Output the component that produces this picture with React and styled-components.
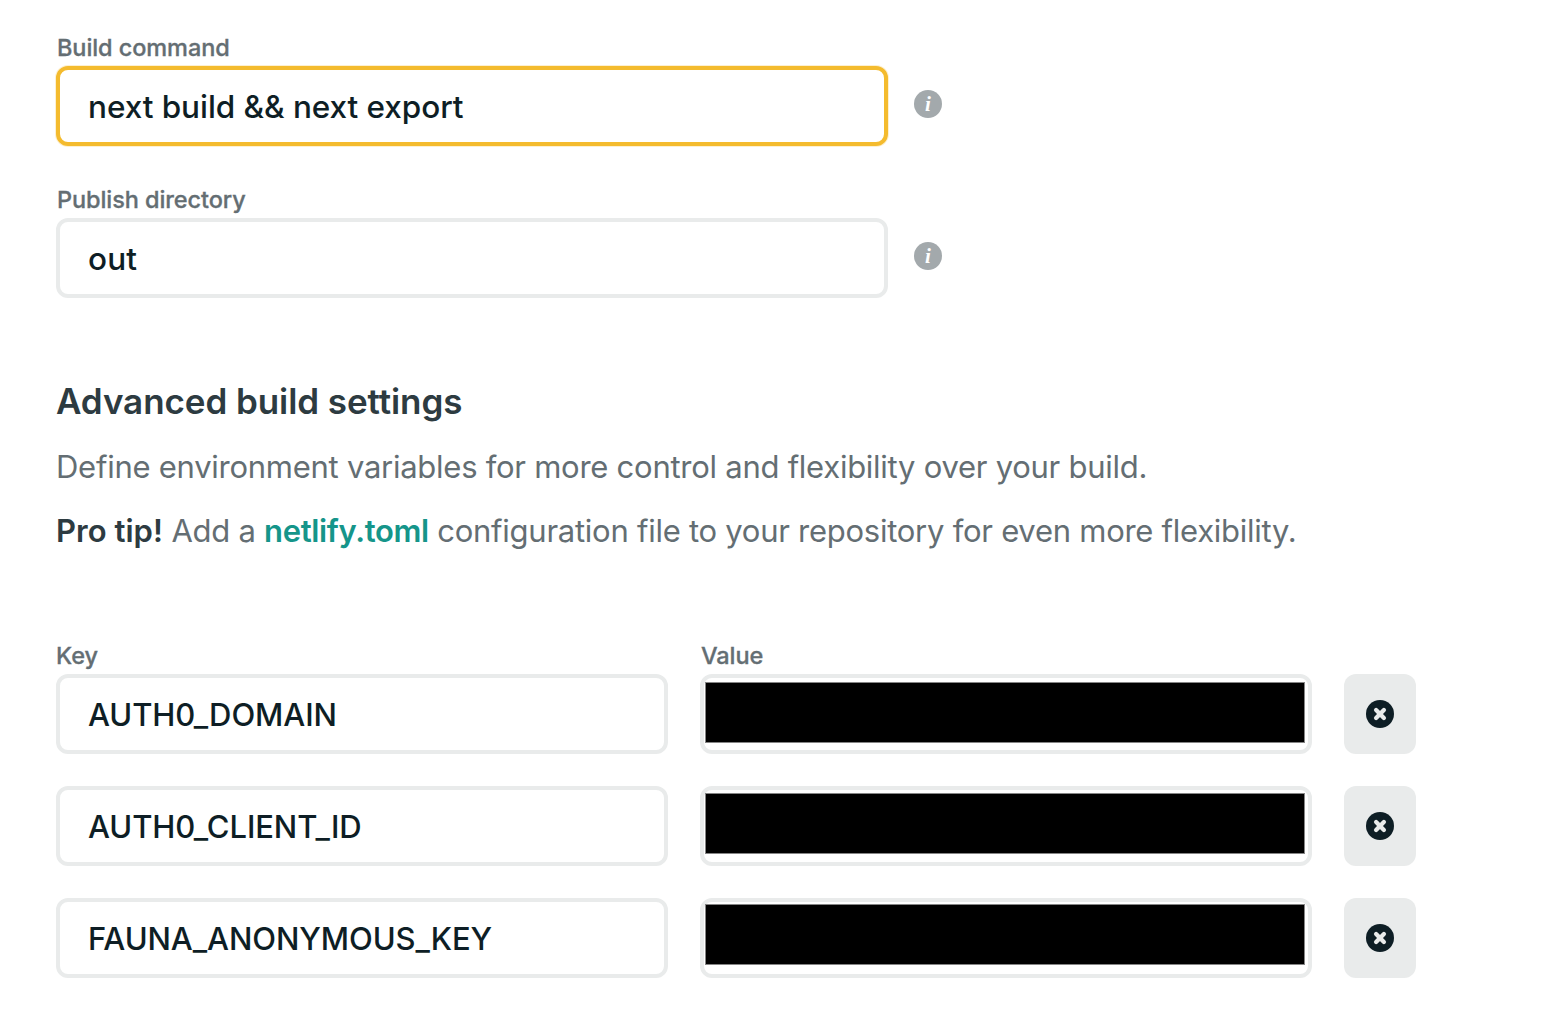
import React from "react";
import styled, { createGlobalStyle } from "styled-components";

const GlobalStyle = createGlobalStyle`
  *, *::before, *::after { box-sizing: border-box; }
  body {
    margin: 0;
    background: #fff;
    font-family: Inter, "Liberation Sans", sans-serif;
    color: #0e1e25;
  }
`;

const Page = styled.main`
  display: flex;
  flex-direction: column;
  height: 1026px;
  padding: 34px 56px 0;
  overflow: hidden;
`;

const Setting = styled.section`
  display: flex;
  flex-direction: column;
  margin-bottom: 40px;
`;

const Label = styled.label`
  height: 32px;
  padding-left: ${(p) => p.$indent || 0}px;
  font-size: 23.5px;
  font-weight: 500;
  line-height: 27px;
  letter-spacing: -0.08px;
  color: #646e73;
  -webkit-text-stroke: 0.3px #646e73;
`;

const SettingRow = styled.div`
  display: flex;
  align-items: center;
  gap: 26px;
`;

const Field = styled.div`
  display: flex;
  align-items: center;
  width: ${(p) => p.$width}px;
  height: 80px;
  padding: ${(p) => p.$code ? 2 : 1}px 28px 0;
  border: 4px solid ${(p) => (p.$focused ? "#f4bb2e" : "#e9ebeb")};
  border-radius: 12px;
  box-shadow: ${(p) => (p.$focused ? "0 0 0 1px rgba(244, 187, 46, 0.22)" : "none")};
  background: #fff;
  font-size: ${(p) => p.$code ? 31 : 31.5}px;
  font-weight: 500;
  line-height: 40px;
  letter-spacing: ${(p) => p.$tracking || 0}px;
  white-space: nowrap;
`;

const InfoBadge = styled.span`
  display: flex;
  align-items: center;
  justify-content: center;
  width: 28px;
  height: 28px;
  margin-bottom: 4px;
  border-radius: 50%;
  background: #a3a9ac;
  color: #fff;
  font: italic 700 21px/28px "Liberation Serif", serif;
`;

const Advanced = styled.section`
  display: flex;
  flex-direction: column;
  margin-top: 39px;
`;

const Heading = styled.h2`
  margin: 0 0 18px;
  font-size: 35px;
  font-weight: 600;
  line-height: 48px;
  letter-spacing: -0.07px;
  color: #2d3b41;
`;

const Paragraph = styled.p`
  margin: 0 0 16px;
  font-size: 31px;
  line-height: 48px;
  letter-spacing: -0.26px;
  color: #646e73;
  white-space: nowrap;
`;

const Tip = styled.strong`
  font-weight: 600;
  letter-spacing: 0.03px;
  color: #2d3b41;
`;

const Link = styled.a`
  font-weight: 600;
  letter-spacing: -0.35px;
  color: #15958a;
  text-decoration: none;
`;

const Variables = styled.section`
  display: grid;
  grid-template-columns: 612px 612px 72px;
  column-gap: 32px;
  row-gap: 32px;
  margin-top: 71px;
`;

const ColumnLabels = styled.div`
  display: grid;
  grid-column: 1 / -1;
  grid-template-columns: subgrid;
  margin-bottom: -32px;
`;

const ValueField = styled.div`
  height: 80px;
  padding: ${(p) => p.$offset}px 3px 0 1px;
  border: 4px solid #e9ebeb;
  border-radius: 12px;
`;

const Redaction = styled.div`
  height: 61px;
  border: 1px solid #858585;
  background: #000;
`;

const RemoveButton = styled.button`
  display: flex;
  align-items: center;
  justify-content: center;
  width: 72px;
  height: 80px;
  padding: 0;
  border: 0;
  border-radius: 12px;
  background: #e9ebeb;
`;

const settings = [
  { label: "Build command", value: "next build && next export", focused: true, tracking: -0.06 },
  { label: "Publish directory", value: "out", tracking: 0.1 },
];

const variables = [
  { name: "AUTH0_DOMAIN", offset: 4 },
  { name: "AUTH0_CLIENT_ID", offset: 3 },
  { name: "FAUNA_ANONYMOUS_KEY", offset: 2 },
];

function RemoveIcon() {
  return (
    <svg width="28" height="28" viewBox="0 0 28 28" aria-hidden="true">
      <circle cx="14" cy="14" r="14" fill="#0e1e25" />
      <path d="M10.1 10.1l7.8 7.8M17.9 10.1l-7.8 7.8" stroke="#e9ebeb" strokeWidth="4.3" strokeLinecap="round" />
    </svg>
  );
}

export default function App() {
  return (
    <>
      <GlobalStyle />
      <Page>
        {settings.map((s) => (
          <Setting key={s.label}>
            <Label $indent={1}>{s.label}</Label>
            <SettingRow>
              <Field $width={832} $focused={s.focused} $tracking={s.tracking}>{s.value}</Field>
              <InfoBadge>i</InfoBadge>
            </SettingRow>
          </Setting>
        ))}
        <Advanced>
          <Heading>Advanced build settings</Heading>
          <Paragraph>
            Define environment variables for more control and flexibility over your build.
          </Paragraph>
          <Paragraph>
            <Tip>Pro tip!</Tip> Add a <Link>netlify.toml</Link> configuration file to your
            repository for even more flexibility.
          </Paragraph>
        </Advanced>
        <Variables>
          <ColumnLabels>
            <Label>Key</Label>
            <Label $indent={1}>Value</Label>
          </ColumnLabels>
          {variables.map((v) => (
            <React.Fragment key={v.name}>
              <Field $width={612} $code $tracking={-0.09}>{v.name}</Field>
              <ValueField $offset={v.offset}>
                <Redaction />
              </ValueField>
              <RemoveButton aria-label="Remove variable">
                <RemoveIcon />
              </RemoveButton>
            </React.Fragment>
          ))}
        </Variables>
      </Page>
    </>
  );
}
